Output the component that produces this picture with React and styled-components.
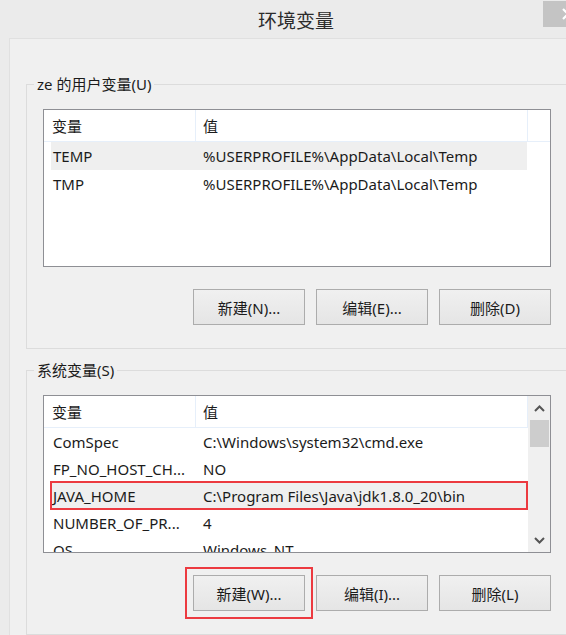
import React from 'react';
import styled, { createGlobalStyle } from 'styled-components';

const GlobalStyle = createGlobalStyle`
    html, body {
        margin: 0;
        padding: 0;
        background: #ebebeb;
    }
    body {
        font-family: "Noto Sans", "Noto Sans CJK SC", sans-serif;
        font-size: 15px;
        color: #1b1b1b;
    }
`;

const Viewport = styled.div`
    width: 566px;
    height: 635px;
    overflow: hidden;
`;

// the dialog is wider than what is shown, its right edge is clipped
const Frame = styled.div`
    width: 592px;
    height: 635px;
    display: flex;
    flex-direction: column;
    background: #ebebeb;
`;

const TitleBar = styled.div`
    height: 39px;
    display: grid;
    grid-template-columns: 49px 1fr 49px;
    align-items: start;
`;

const Title = styled.div`
    grid-column: 2;
    align-self: center;
    text-align: center;
    font-family: "Noto Sans CJK SC", sans-serif;
    font-size: 19px;
    color: #2b2b2b;
    line-height: 24px;
    padding-top: 1px;
`;

const CloseButton = styled.div`
    grid-column: 3;
    margin-top: 1px;
    height: 26px;
    background: #c4c4c4;
    display: flex;
    align-items: center;
    justify-content: center;
`;

const Panel = styled.div`
    flex: 1;
    margin: 0 9px;
    background: #f0f0f0;
    border-top: 1px solid #e0e0e0;
    border-left: 1px solid #e0e0e0;
    padding: 35px 14px 0 16px;
    display: flex;
    flex-direction: column;
    gap: 11px;
`;

const Group = styled.fieldset`
    margin: 0;
    padding: 15px 17px 23px 16px;
    border: 1px solid #dcdcdc;
    display: flex;
    flex-direction: column;
    gap: 22px;
    min-width: 0;
`;

const Legend = styled.legend`
    padding: 0 3px;
    margin-left: -9px;
    line-height: 20px;
    font-family: "Noto Sans", "Noto Sans CJK SC", sans-serif;
`;

const ListBox = styled.div`
    height: 156px;
    border: 1px solid #8e8f94;
    background: #fff;
    display: flex;
    overflow: hidden;
`;

const ListBody = styled.div`
    flex: 1;
    display: flex;
    flex-direction: column;
    min-width: 0;
`;

const Header = styled.div`
    display: grid;
    grid-template-columns: 151px 332px 1fr;
    height: ${({ $h }) => $h}px;
    border-bottom: 1px solid #e6effa;
    flex-shrink: 0;
`;

const HeaderCell = styled.div`
    display: flex;
    align-items: center;
    padding-left: ${({ $pad }) => $pad}px;
    border-left: ${({ $line }) => ($line ? '1px solid #e6effa' : 'none')};
    white-space: nowrap;
`;

const Rows = styled.div`
    padding-left: 7px;
    display: flex;
    flex-direction: column;
`;

const Row = styled.div`
    width: 476px;
    height: ${({ $h }) => $h}px;
    flex-shrink: 0;
    display: grid;
    grid-template-columns: 144px 332px;
    align-items: center;
    background: ${({ $selected }) => ($selected ? '#efefef' : 'transparent')};
    outline: ${({ $marked }) => ($marked ? '2px solid #ec3a40' : 'none')};
    outline-offset: -1px;
`;

const Cell = styled.div`
    padding-left: ${({ $pad }) => $pad}px;
    white-space: nowrap;
    overflow: hidden;
`;

const ScrollBar = styled.div`
    width: 22px;
    flex-shrink: 0;
    background: #f0f0f0;
    display: flex;
    flex-direction: column;
    align-items: center;
`;

const ScrollArrow = styled.div`
    height: 24px;
    width: 100%;
    display: flex;
    align-items: center;
    justify-content: center;
    flex-shrink: 0;
`;

const ScrollThumb = styled.div`
    width: 19px;
    height: 27px;
    background: #cdcdcd;
`;

const ScrollTrack = styled.div`
    flex: 1;
`;

const ButtonRow = styled.div`
    display: flex;
    justify-content: flex-end;
    gap: 11px;
`;

const Button = styled.button`
    width: 112px;
    height: 36px;
    border: 1px solid #acacac;
    background: linear-gradient(#f0f0f0, #e5e5e5);
    font-family: "Noto Sans", "Noto Sans CJK SC", sans-serif;
    font-size: 15px;
    color: #1b1b1b;
    padding: 0;
    outline: ${({ $marked }) => ($marked ? '2px solid #ec3a40' : 'none')};
    outline-offset: 6px;
`;

const Chevron = ({ up }) => (
    <svg width="11" height="7" viewBox="0 0 11 7">
        <path
            d={up ? 'M1 6 L5.5 1.5 L10 6' : 'M1 1 L5.5 5.5 L10 1'}
            fill="none"
            stroke="#555"
            strokeWidth="2"
        />
    </svg>
);

const userVars = [
    { name: 'TEMP', value: '%USERPROFILE%\\AppData\\Local\\Temp', selected: true },
    { name: 'TMP', value: '%USERPROFILE%\\AppData\\Local\\Temp' },
];

const systemVars = [
    { name: 'ComSpec', value: 'C:\\Windows\\system32\\cmd.exe' },
    { name: 'FP_NO_HOST_CH...', value: 'NO' },
    { name: 'JAVA_HOME', value: 'C:\\Program Files\\Java\\jdk1.8.0_20\\bin', selected: true, marked: true },
    { name: 'NUMBER_OF_PR...', value: '4' },
    { name: 'OS', value: 'Windows_NT' },
];

const VarList = ({ items, headerH, rowH, scroll }) => (
    <ListBox>
        <ListBody>
            <Header $h={headerH}>
                <HeaderCell $pad={8}>变量</HeaderCell>
                <HeaderCell $pad={7} $line>值</HeaderCell>
                <HeaderCell $pad={0} $line />
            </Header>
            <Rows>
                {items.map((v) => (
                    <Row key={v.name} $h={rowH} $selected={v.selected} $marked={v.marked}>
                        <Cell $pad={2}>{v.name}</Cell>
                        <Cell $pad={8}>{v.value}</Cell>
                    </Row>
                ))}
            </Rows>
        </ListBody>
        {scroll && (
            <ScrollBar>
                <ScrollArrow><Chevron up /></ScrollArrow>
                <ScrollThumb />
                <ScrollTrack />
                <ScrollArrow><Chevron /></ScrollArrow>
            </ScrollBar>
        )}
    </ListBox>
);

const App = () => (
    <Viewport>
        <GlobalStyle />
        <Frame>
            <TitleBar>
                <Title>环境变量</Title>
                <CloseButton>
                    <svg width="12" height="12" viewBox="0 0 12 12">
                        <path d="M1 1 L11 11 M11 1 L1 11" stroke="#fff" strokeWidth="2.2" />
                    </svg>
                </CloseButton>
            </TitleBar>
            <Panel>
                <Group>
                    <Legend>ze 的用户变量(U)</Legend>
                    <VarList items={userVars} headerH={31} rowH={28} />
                    <ButtonRow>
                        <Button>新建(N)...</Button>
                        <Button>编辑(E)...</Button>
                        <Button>删除(D)</Button>
                    </ButtonRow>
                </Group>
                <Group>
                    <Legend>系统变量(S)</Legend>
                    <VarList items={systemVars} headerH={31} rowH={27} scroll />
                    <ButtonRow>
                        <Button $marked>新建(W)...</Button>
                        <Button>编辑(I)...</Button>
                        <Button>删除(L)</Button>
                    </ButtonRow>
                </Group>
            </Panel>
        </Frame>
    </Viewport>
);

export default App;
